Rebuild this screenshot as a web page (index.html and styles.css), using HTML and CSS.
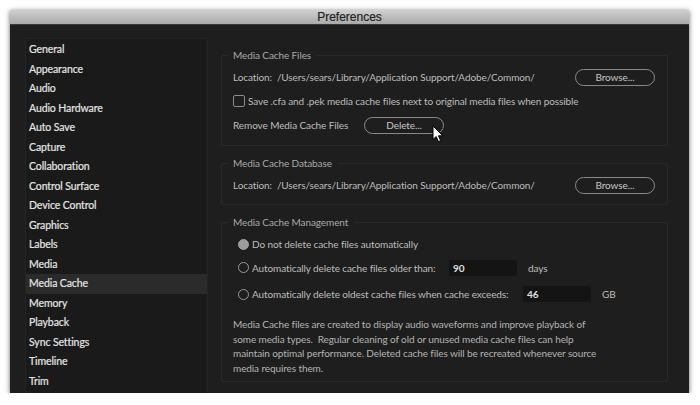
FILE: index.html
```html
<!DOCTYPE html>
<html>
<head>
<meta charset="utf-8">
<link rel="stylesheet" href="styles.css">
</head>
<body>
<div class="window">
  <div class="titlebar">Preferences</div>
  <div class="content">
    <ul class="sidebar">
      <li>General</li>
      <li>Appearance</li>
      <li>Audio</li>
      <li>Audio Hardware</li>
      <li>Auto Save</li>
      <li>Capture</li>
      <li>Collaboration</li>
      <li>Control Surface</li>
      <li>Device Control</li>
      <li>Graphics</li>
      <li>Labels</li>
      <li>Media</li>
      <li class="active">Media Cache</li>
      <li>Memory</li>
      <li>Playback</li>
      <li>Sync Settings</li>
      <li>Timeline</li>
      <li>Trim</li>
    </ul>
    <div class="main">
      <fieldset class="group g1">
        <legend>Media Cache Files</legend>
        <div class="row">
          <span class="loc">Location:&nbsp; /Users/sears/Library/Application Support/Adobe/Common/</span>
          <button class="btn browse">Browse...</button>
        </div>
        <div class="row">
          <span class="check"></span>
          <span>Save .cfa and .pek media cache files next to original media files when possible</span>
        </div>
        <div class="row">
          <span class="remove-label">Remove Media Cache Files</span>
          <span class="delete-wrap">
            <button class="btn delete">Delete...</button>
            <svg class="cursor" width="12" height="18" viewBox="0 0 12 18"><path d="M1 1 L1 14.5 L4.2 11.6 L6.4 16.6 L8.6 15.6 L6.5 10.8 L10.8 10.8 Z" fill="#fff" stroke="#000" stroke-width="1" stroke-linejoin="round"/></svg>
          </span>
        </div>
      </fieldset>
      <fieldset class="group g2">
        <legend>Media Cache Database</legend>
        <div class="row">
          <span class="loc">Location:&nbsp; /Users/sears/Library/Application Support/Adobe/Common/</span>
          <button class="btn browse">Browse...</button>
        </div>
      </fieldset>
      <fieldset class="group g3">
        <legend>Media Cache Management</legend>
        <div class="radio-row r1">
          <span class="radio on"></span>
          <span>Do not delete cache files automatically</span>
        </div>
        <div class="radio-row r2">
          <span class="radio"></span>
          <span class="opt-label1">Automatically delete cache files older than:</span>
          <span class="field">90</span>
          <span class="unit">days</span>
        </div>
        <div class="radio-row r3">
          <span class="radio"></span>
          <span class="opt-label2">Automatically delete oldest cache files when cache exceeds:</span>
          <span class="field">46</span>
          <span class="unit">GB</span>
        </div>
        <p class="desc">Media Cache files are created to display audio waveforms and improve playback of some media types.&nbsp; Regular cleaning of old or unused media cache files can help maintain optimal performance. Deleted cache files will be recreated whenever source media requires them.</p>
      </fieldset>
    </div>
  </div>
</div>
</body>
</html>
```
FILE: styles.css
```css
* { box-sizing: border-box; }
body {
  margin: 0;
  background: #fff;
  font-family: Lato, "Open Sans", sans-serif;
}
.window {
  margin: 10px 0 0 10px;
  width: 679px;
  height: 383px;
  background: #1e1e1e;
  box-shadow: 0 1px 5px rgba(0,0,0,0.6);
  display: flex;
  flex-direction: column;
}
.titlebar {
  height: 15px;
  background: linear-gradient(#cfcfcf, #a9a9a9);
  border-bottom: 1px solid #3a3a3a;
  color: #222;
  font-family: "Liberation Sans", Arial, sans-serif;
  font-size: 12px;
  line-height: 14px;
  text-align: center;
  -webkit-text-stroke: 0.2px #222;
}
.content {
  flex: 1;
  display: flex;
  padding: 13px 0 0 15px;
  gap: 13px;
}
.sidebar {
  list-style: none;
  margin: 0;
  padding: 1px 0 0 0;
  width: 183px;
  background: #1a1a1a;
  border: 1px solid #242424;
  border-bottom: none;
}
.sidebar li {
  height: 19.5px;
  line-height: 19.5px;
  padding-left: 3px;
  color: #e4e4e4;
  font-size: 10.5px;
  letter-spacing: -0.1px;
  font-weight: 400;
  -webkit-text-stroke: 0.2px #e4e4e4;
}
.sidebar li.active {
  background: #2b2b2b;
}
.main {
  width: 447px;
  display: flex;
  flex-direction: column;
  color: #bdbdbd;
  font-size: 10px;
  letter-spacing: -0.1px;
  white-space: nowrap;
}
.group {
  margin: 0;
  border: 1px solid #2a2a2a;
  border-radius: 2px;
  padding: 0 12px 0 11px;
  min-width: 0;
}
.group legend {
  padding: 0 6px 0 5px;
  margin-left: -5px;
  color: #a9a9a9;
  font-size: 10px;
  line-height: 12px;
}
.g1 { margin-top: 11px; padding-top: 4px; padding-bottom: 8px; }
.g2 { margin-top: 11px; padding-top: 4px; padding-bottom: 7px; }
.g3 { margin-top: 11px; padding-top: 5px; padding-bottom: 6px; }
.row {
  height: 24px;
  display: flex;
  align-items: center;
}
.loc { flex: 1; }
.btn {
  font-family: inherit;
  font-size: 10px;
  letter-spacing: -0.1px;
  color: #c6c6c6;
  background: transparent;
  border: 1.5px solid #8a8a8a;
  border-radius: 9px;
  height: 17px;
  width: 80px;
  padding: 0;
  line-height: 14px;
}
.check {
  width: 12px;
  height: 12px;
  border: 1.5px solid #8c8c8c;
  border-radius: 2px;
  margin-right: 3px;
}
.remove-label { width: 131px; }
.delete-wrap { position: relative; }
.cursor {
  position: absolute;
  left: 68px;
  top: 8px;
}
.radio-row {
  display: flex;
  align-items: center;
}
.r1 { height: 22px; padding-left: 5px; }
.r2 { height: 25px; padding-left: 5px; }
.r3 { height: 24px; padding-left: 5px; margin-top: 2px; }
.radio {
  width: 11px;
  height: 11px;
  border-radius: 50%;
  border: 1.5px solid #999;
  margin-right: 3px;
}
.radio.on {
  background: #9d9d9d;
  border-color: #9d9d9d;
}
.opt-label1 { width: 197px; }
.opt-label2 { width: 271px; }
.field {
  width: 68px;
  height: 16px;
  background: #141414;
  color: #e0e0e0;
  font-weight: 700;
  line-height: 16px;
  padding-left: 4px;
}
.unit { margin-left: 11px; }
.desc {
  margin: 11px 0 0 0;
  width: 372px;
  line-height: 14.5px;
  color: #b4b4b4;
  white-space: normal;
}
```
